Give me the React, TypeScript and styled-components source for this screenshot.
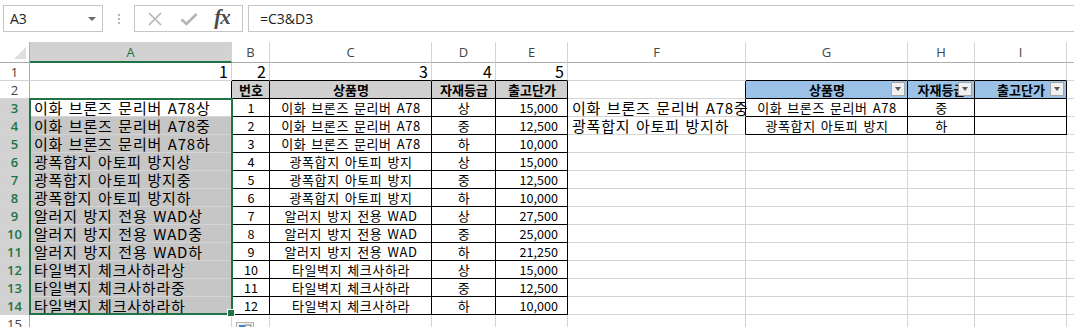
import styled, { createGlobalStyle } from "styled-components";

const GlobalStyle = createGlobalStyle`
  html, body {
    margin: 0;
    padding: 0;
    background: #ffffff;
    overflow: hidden;
  }
  body {
    font-family: "Noto Sans CJK KR", "Noto Sans", sans-serif;
  }
`;

const GREEN = "#217346";
const GRID = "#d4d4d4";
const COLS = [30, 202, 38, 162, 64, 72, 178, 162, 67, 92, 20];
const LETTERS = ["", "A", "B", "C", "D", "E", "F", "G", "H", "I", ""];

const Page = styled.div`
  width: 1074px;
  height: 327px;
  overflow: hidden;
  background: #ffffff;
`;

const FormulaBar = styled.div`
  display: flex;
  align-items: center;
  height: 42px;
  padding: 0 0 5px 3px;
  box-sizing: border-box;
`;

const NameBox = styled.div`
  width: 100px;
  height: 27px;
  box-sizing: border-box;
  border: 1px solid #c6c6c6;
  display: flex;
  align-items: center;
  justify-content: space-between;
  padding: 0 6px;
  font-family: "Open Sans", "Noto Sans", sans-serif;
  font-size: 14px;
  color: #222;
`;

const Caret = styled.span`
  width: 0;
  height: 0;
  border-left: 4px solid transparent;
  border-right: 4px solid transparent;
  border-top: 4px solid #6b6b6b;
`;

const Dots = styled.div`
  width: 31px;
  display: flex;
  flex-direction: column;
  align-items: center;
  gap: 2px;
  span {
    width: 2px;
    height: 2px;
    background: #b8b8b8;
  }
`;

const ButtonBox = styled.div`
  width: 109px;
  height: 27px;
  box-sizing: border-box;
  border: 1px solid #c6c6c6;
  display: flex;
  align-items: center;
  justify-content: space-around;
  padding: 0 4px;
`;

const Fx = styled.span`
  font-family: "Liberation Serif", "DejaVu Serif", serif;
  font-style: italic;
  font-weight: bold;
  font-size: 21px;
  color: #4a4a4a;
  letter-spacing: -1px;
  margin-top: -3px;
`;

const FormulaInput = styled.div`
  flex: 1;
  height: 27px;
  margin-left: 5px;
  box-sizing: border-box;
  border: 1px solid #c6c6c6;
  border-right: none;
  display: flex;
  align-items: center;
  padding-left: 11px;
  font-family: "Open Sans", "Noto Sans", sans-serif;
  font-size: 14px;
  color: #222;
`;

const SheetWrap = styled.div`
  position: relative;
`;

const Sheet = styled.div`
  display: grid;
  grid-template-columns: ${COLS.map((c) => `${c}px`).join(" ")};
  grid-template-rows: 21px repeat(15, 18px);
`;

const ColHead = styled.div<{ $sel?: boolean }>`
  box-sizing: border-box;
  border-right: 1px solid ${GRID};
  border-bottom: ${(p) => (p.$sel ? `2px solid ${GREEN}` : "1px solid #ababab")};
  background: ${(p) => (p.$sel ? "#d2d2d2" : "#ffffff")};
  color: ${(p) => (p.$sel ? GREEN : "#444444")};
  font-family: "Open Sans", "Noto Sans", sans-serif;
  font-size: 13px;
  display: flex;
  align-items: center;
  justify-content: center;
`;

const Corner = styled.div`
  box-sizing: border-box;
  border-right: 1px solid #ababab;
  border-bottom: 1px solid #ababab;
  background: #ffffff;
  position: relative;
  svg {
    position: absolute;
    right: 3px;
    bottom: 3px;
  }
`;

const RowHead = styled.div<{ $sel?: boolean }>`
  box-sizing: border-box;
  border-right: 1px solid #ababab;
  border-bottom: 1px solid ${GRID};
  background: ${(p) => (p.$sel ? "#d2d2d2" : "#ffffff")};
  color: ${(p) => (p.$sel ? GREEN : "#444444")};
  font-family: "Open Sans", "Noto Sans", sans-serif;
  font-size: 13px;
  font-weight: ${(p) => (p.$sel ? 600 : 400)};
  display: flex;
  align-items: center;
  justify-content: center;
`;

type Align = "left" | "center" | "right";
type Kind = "big" | "text" | "num" | "head" | "label";

const fontSizes: Record<Kind, string> = {
  big: "15px",
  text: "13px",
  num: "12.6px",
  head: "13px",
  label: "16px",
};
const spacing: Record<Kind, string> = {
  big: "0.8px",
  text: "0.6px",
  num: "0px",
  head: "0px",
  label: "0px",
};

const Cell = styled.div<{
  $align: Align;
  $bg?: string;
  $rb: string;
  $bb: string;
  $kind: Kind;
  $padR?: number;
  $clip?: boolean;
}>`
  box-sizing: border-box;
  position: relative;
  border-right: 1px solid ${(p) => p.$rb};
  border-bottom: 1px solid ${(p) => p.$bb};
  background: ${(p) => p.$bg || "#ffffff"};
  display: flex;
  align-items: center;
  justify-content: ${(p) =>
    p.$align === "left" ? "flex-start" : p.$align === "right" ? "flex-end" : "center"};
  padding: 0 ${(p) => p.$padR ?? 3}px 0 4px;
  white-space: nowrap;
  overflow: ${(p) => (p.$clip ? "hidden" : "visible")};
  color: #000000;
  font-size: ${(p) => fontSizes[p.$kind]};
  font-weight: ${(p) => (p.$kind === "head" ? 700 : 400)};
  letter-spacing: ${(p) => spacing[p.$kind]};
  word-spacing: ${(p) => (p.$kind === "big" || p.$kind === "text" ? "1.5px" : "0px")};
  line-height: 17px;
  z-index: ${(p) => (p.$align === "left" ? 1 : 0)};
`;

const FilterBtn = styled.span`
  position: absolute;
  right: 2px;
  top: 1px;
  width: 14px;
  height: 14px;
  box-sizing: border-box;
  border: 1px solid #a6a6a6;
  background: #f0f0f0;
  display: flex;
  align-items: center;
  justify-content: center;
  &::after {
    content: "";
    border-left: 3.5px solid transparent;
    border-right: 3.5px solid transparent;
    border-top: 4px solid #555;
  }
`;

const Selection = styled.div`
  position: absolute;
  left: 29px;
  top: 56px;
  width: 204px;
  height: 217px;
  box-sizing: border-box;
  border: 2px solid ${GREEN};
  pointer-events: none;
  z-index: 3;
`;

const FillHandle = styled.div`
  position: absolute;
  right: -4px;
  bottom: -4px;
  width: 6px;
  height: 6px;
  background: ${GREEN};
  border: 1px solid #ffffff;
`;

const FillOptions = styled.div`
  position: absolute;
  left: 236px;
  top: 275px;
  z-index: 3;
`;

type CellDef = {
  text: string;
  align?: Align;
  kind?: Kind;
  bg?: string;
  filter?: boolean;
  padR?: number;
};

const aText = [
  "이화 브론즈 문리버 A78상",
  "이화 브론즈 문리버 A78중",
  "이화 브론즈 문리버 A78하",
  "광폭합지 아토피 방지상",
  "광폭합지 아토피 방지중",
  "광폭합지 아토피 방지하",
  "알러지 방지 전용 WAD상",
  "알러지 방지 전용 WAD중",
  "알러지 방지 전용 WAD하",
  "타일벽지 체크사하라상",
  "타일벽지 체크사하라중",
  "타일벽지 체크사하라하",
];

const products = [
  "이화 브론즈 문리버 A78",
  "광폭합지 아토피 방지",
  "알러지 방지 전용 WAD",
  "타일벽지 체크사하라",
];
const grades = ["상", "중", "하"];
const prices = [
  "15,000", "12,500", "10,000",
  "15,000", "12,500", "10,000",
  "27,500", "25,000", "21,250",
  "15,000", "12,500", "10,000",
];

// rows 1..15, cols 1..10 (A..J)
const buildCells = (): Record<string, CellDef> => {
  const m: Record<string, CellDef> = {};
  ["1", "2", "3", "4", "5"].forEach((n, i) => {
    m[`1-${i + 1}`] = { text: n, align: "right", kind: "label" };
  });
  const heads = ["번호", "상품명", "자재등급", "출고단가"];
  heads.forEach((h, i) => {
    m[`2-${i + 2}`] = { text: h, align: "center", kind: "head", bg: "#d0d0d0" };
  });
  for (let i = 0; i < 12; i++) {
    const r = i + 3;
    m[`${r}-1`] = {
      text: aText[i],
      align: "left",
      kind: "big",
      bg: i === 0 ? "#ffffff" : "#c6c6c6",
    };
    m[`${r}-2`] = { text: String(i + 1), align: "center", kind: "num" };
    m[`${r}-3`] = { text: products[Math.floor(i / 3)], align: "center", kind: "text" };
    m[`${r}-4`] = { text: grades[i % 3], align: "center", kind: "text" };
    m[`${r}-5`] = { text: prices[i], align: "right", kind: "num", padR: 9 };
  }
  m["3-6"] = { text: "이화 브론즈 문리버 A78중", align: "left", kind: "big" };
  m["4-6"] = { text: "광폭합지 아토피 방지하", align: "left", kind: "big" };
  m["2-7"] = { text: "상품명", align: "center", kind: "head", bg: "#9bc2e6", filter: true };
  m["2-8"] = { text: "자재등급", align: "center", kind: "head", bg: "#9bc2e6", filter: true };
  m["2-9"] = { text: "출고단가", align: "center", kind: "head", bg: "#9bc2e6", filter: true };
  m["3-7"] = { text: "이화 브론즈 문리버 A78", align: "center", kind: "text" };
  m["3-8"] = { text: "중", align: "center", kind: "text" };
  m["4-7"] = { text: "광폭합지 아토피 방지", align: "center", kind: "text" };
  m["4-8"] = { text: "하", align: "center", kind: "text" };
  return m;
};

const inTable = (r: number, c: number) =>
  (r >= 2 && r <= 14 && c >= 2 && c <= 5) || (r >= 2 && r <= 4 && c >= 7 && c <= 9);

const CornerIcon = () => (
  <svg width="12" height="12" viewBox="0 0 12 12">
    <polygon points="12,0 12,12 0,12" fill="#dfdfdf" />
  </svg>
);

const XIcon = () => (
  <svg width="16" height="16" viewBox="0 0 16 16">
    <path d="M2 2 L14 14 M14 2 L2 14" stroke="#b4b4b4" strokeWidth="1.6" fill="none" />
  </svg>
);

const CheckIcon = () => (
  <svg width="18" height="16" viewBox="0 0 18 16">
    <path d="M1.5 8.5 L6.5 13 L16.5 3" stroke="#b4b4b4" strokeWidth="2.6" fill="none" />
  </svg>
);

const FillOptionsIcon = () => (
  <svg width="18" height="14" viewBox="0 0 18 14">
    <rect x="0.5" y="0.5" width="17" height="13" fill="#f4f4f4" stroke="#b0b0b0" />
    <rect x="3" y="3" width="6" height="4" fill="#3c7fd4" />
    <rect x="9" y="3" width="6" height="8" fill="none" stroke="#7a7a7a" />
    <rect x="3" y="7" width="6" height="4" fill="none" stroke="#7a7a7a" />
  </svg>
);

function RowLine({
  r,
  cols,
  cells,
}: {
  r: number;
  cols: number[];
  cells: Record<string, CellDef>;
}) {
  return (
    <>
      <RowHead $sel={r >= 3 && r <= 14}>{r}</RowHead>
      {cols.map((c) => {
        const d = cells[`${r}-${c}`];
        const rb = inTable(r, c) || inTable(r, c + 1) ? "#000000" : GRID;
        const bb = inTable(r, c) || inTable(r + 1, c) ? "#000000" : GRID;
        return (
          <Cell
            key={c}
            $align={d?.align ?? "left"}
            $bg={d?.bg}
            $rb={rb}
            $bb={bb}
            $kind={d?.kind ?? "text"}
            $padR={d?.padR}
            $clip={d?.filter}
          >
            {d?.text}
            {d?.filter && <FilterBtn />}
          </Cell>
        );
      })}
    </>
  );
}

export default function App() {
  const cells = buildCells();
  const rows = Array.from({ length: 15 }, (_, i) => i + 1);
  const cols = Array.from({ length: 10 }, (_, i) => i + 1);

  return (
    <Page>
      <GlobalStyle />
      <FormulaBar>
        <NameBox>
          A3
          <Caret />
        </NameBox>
        <Dots>
          <span />
          <span />
          <span />
        </Dots>
        <ButtonBox>
          <XIcon />
          <CheckIcon />
          <Fx>fx</Fx>
        </ButtonBox>
        <FormulaInput>=C3&amp;D3</FormulaInput>
      </FormulaBar>
      <SheetWrap>
        <Sheet>
          <Corner>
            <CornerIcon />
          </Corner>
          {LETTERS.slice(1).map((l, i) => (
            <ColHead key={`h${i}`} $sel={l === "A"}>
              {l}
            </ColHead>
          ))}
          {rows.map((r) => (
            <RowLine key={r} r={r} cols={cols} cells={cells} />
          ))}
        </Sheet>
        <Selection>
          <FillHandle />
        </Selection>
        <FillOptions>
          <FillOptionsIcon />
        </FillOptions>
      </SheetWrap>
    </Page>
  );
}
